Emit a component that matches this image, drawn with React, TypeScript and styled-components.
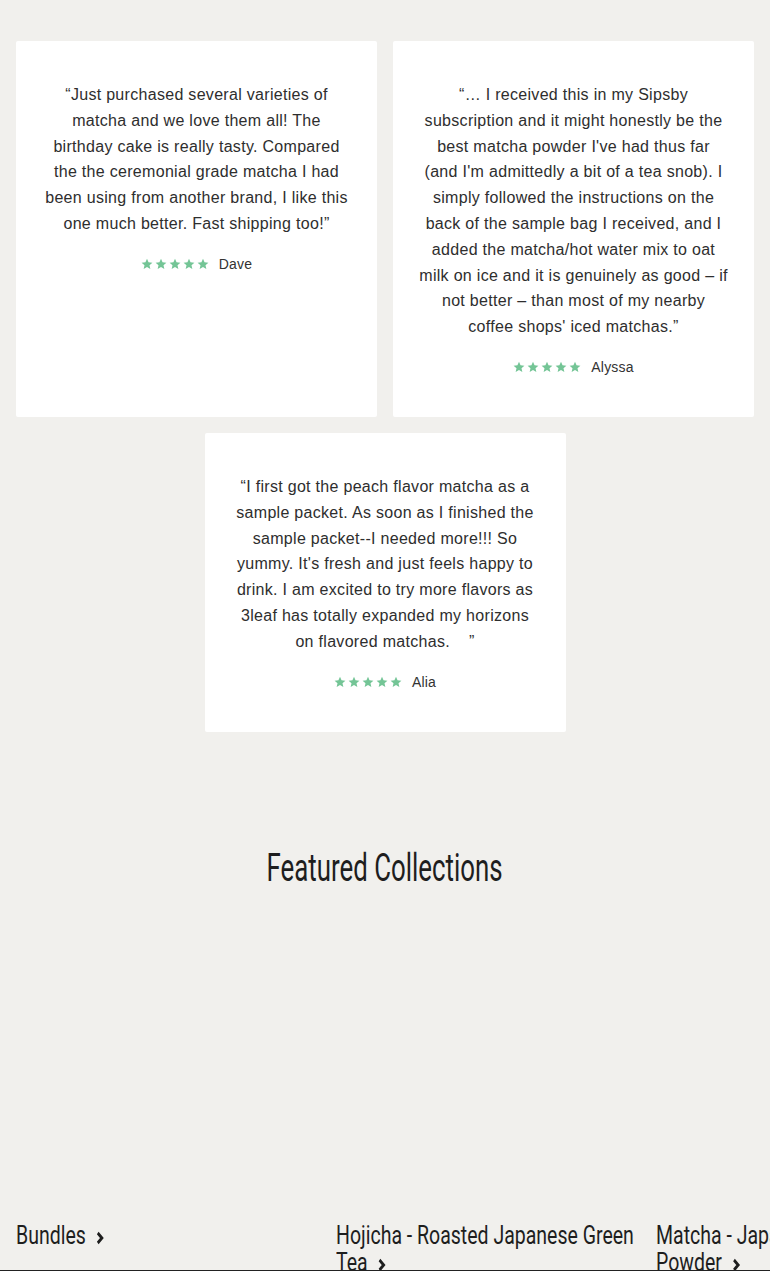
import React from 'react'
import styled, {createGlobalStyle} from 'styled-components'

const GlobalStyle = createGlobalStyle`
  html, body {
    margin: 0;
    padding: 0;
    background: #f1f0ed;
  }
  body {
    font-family: "Liberation Sans", Arial, sans-serif;
    color: #333;
    overflow-x: hidden;
  }
`

const Page = styled.div`
  width: 770px;
  padding-top: 41px;
`

const Reviews = styled.div`
  display: flex;
  flex-wrap: wrap;
  justify-content: center;
  gap: 16px;
  padding: 0 16px;
`

const Card = styled.div`
  box-sizing: border-box;
  width: 361px;
  background: #fff;
  border-radius: 2px;
  padding: 41px 26.25px 40px;
  display: flex;
  flex-direction: column;
  align-items: center;
`

const Quote = styled.p`
  margin: 0;
  font-size: 16px;
  letter-spacing: 0.3px;
  line-height: 25.8px;
  text-align: center;
  color: #2e2e2e;
`

const Rating = styled.div`
  display: flex;
  align-items: center;
  gap: 10px;
  margin-top: 17px;
  height: 20px;
`

const Stars = styled.div`
  display: flex;
  gap: 2px;
`

const Name = styled.span`
  font-size: 14px;
  letter-spacing: 0.2px;
  color: #333;
`

const Heading = styled.h2`
  margin: 114px 0 0;
  text-align: center;
  font-family: Roboto, "Liberation Sans", sans-serif;
  font-weight: 400;
  font-size: 38px;
  line-height: 44px;
  color: #1e1e1e;
  span {
    display: inline-block;
    transform: scaleX(0.68);
  }
`

const Collections = styled.div`
  display: flex;
  gap: 16px;
  height: 358px;
  padding: 0 16px;
  margin-top: 22px;
  overflow: hidden;
`

const Collection = styled.a`
  flex: 0 0 304px;
  min-width: 0;
  display: block;
  text-decoration: none;
  color: #222;
`

const Thumb = styled.div`
  width: 304px;
  height: 304px;
  background: #f1f0ed;
`

// condensed look: laid out at a wider box, then squeezed horizontally
const Title = styled.div`
  width: 405px;
  margin-top: 6px;
  transform: scaleX(0.75);
  transform-origin: left top;
  font-family: Roboto, "Liberation Sans", sans-serif;
  font-weight: 400;
  font-size: 26px;
  line-height: 27px;
  color: #1e1e1e;
  svg {
    margin-left: 12px;
    vertical-align: -2px;
  }
`

const Footer = styled.div`
  height: 60px;
  background: #222;
`

const Star = () => (
  <svg width="12" height="12" viewBox="0 0 24 24">
    <path fill="#74c596" d="M12 1.5l3.1 7.1 7.7.7-5.8 5.1 1.7 7.6L12 18l-6.7 4 1.7-7.6-5.8-5.1 7.7-.7z"/>
  </svg>
)

const Chevron = () => (
  <svg width="16" height="16" viewBox="0 0 16 16">
    <path d="M4 3l5.5 5-5.5 5" fill="none" stroke="#1e1e1e" strokeWidth="3.4"/>
  </svg>
)

type Review = {text: string, name: string}

const reviews: Array<Review> = [
  {
    text: '“Just purchased several varieties of matcha and we love them all! The birthday cake is really tasty. Compared the the ceremonial grade matcha I had been using from another brand, I like this one much better. Fast shipping too!”',
    name: 'Dave'
  },
  {
    text: '“… I received this in my Sipsby subscription and it might honestly be the best matcha powder I\'ve had thus far (and I\'m admittedly a bit of a tea snob). I simply followed the instructions on the back of the sample bag I received, and I added the matcha/hot water mix to oat milk on ice and it is genuinely as good – if not better – than most of my nearby coffee shops\' iced matchas.”',
    name: 'Alyssa'
  },
  {
    text: '“I first got the peach flavor matcha as a sample packet. As soon as I finished the sample packet--I needed more!!! So yummy. It\'s fresh and just feels happy to drink. I am excited to try more flavors as 3leaf has totally expanded my horizons on flavored matchas.\u00a0\u00a0\u00a0\u00a0”',
    name: 'Alia'
  }
]

const collections = ['Bundles', 'Hojicha - Roasted Japanese Green Tea', 'Matcha - Japanese Green Tea Powder']

const App: React.FC = () => {
  return (
    <Page>
      <GlobalStyle/>
      <Reviews>
        {reviews.map(r => (
          <Card key={r.name}>
            <Quote>{r.text}</Quote>
            <Rating>
              <Stars>{[0, 1, 2, 3, 4].map(i => <Star key={i}/>)}</Stars>
              <Name>{r.name}</Name>
            </Rating>
          </Card>
        ))}
      </Reviews>
      <Heading><span>Featured Collections</span></Heading>
      <Collections>
        {collections.map(c => (
          <Collection key={c} href="#">
            <Thumb/>
            <Title>{c}<Chevron/></Title>
          </Collection>
        ))}
      </Collections>
      <Footer/>
    </Page>
  )
}

export default App
